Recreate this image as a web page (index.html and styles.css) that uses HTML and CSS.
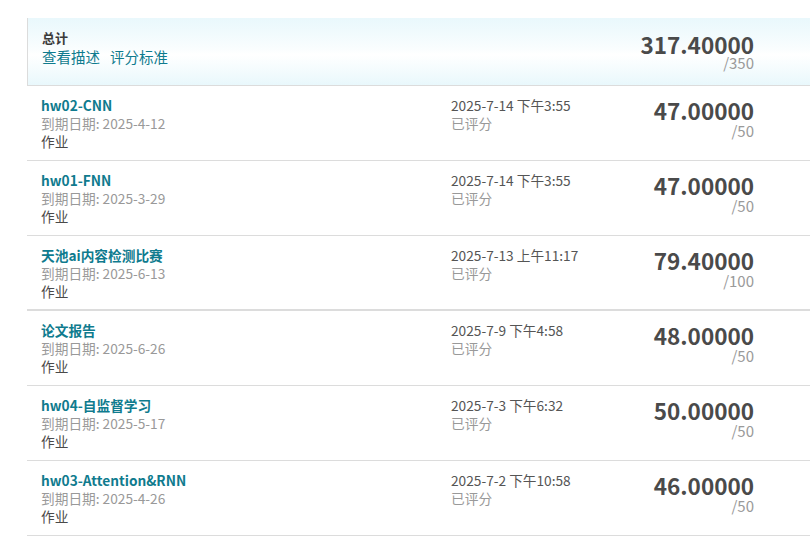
FILE: index.html
```html
<!DOCTYPE html>
<html lang="zh">
<head>
<meta charset="utf-8">
<link rel="stylesheet" href="styles.css">
</head>
<body>
<div class="page">
  <div class="table">
    <div class="total">
      <div class="total-left">
        <div class="total-title">总计</div>
        <div class="total-links"><a href="#">查看描述</a><a href="#">评分标准</a></div>
      </div>
      <div class="score score-total">
        <div class="score-value">317.40000</div>
        <div class="score-max">/350</div>
      </div>
    </div>

    <div class="row">
      <div class="name">
        <div class="title">hw02-CNN</div>
        <div class="due">到期日期: 2025-4-12</div>
        <div class="type">作业</div>
      </div>
      <div class="status">
        <div class="date">2025-7-14 下午3:55</div>
        <div class="graded">已评分</div>
      </div>
      <div class="score">
        <div class="score-value">47.00000</div>
        <div class="score-max">/50</div>
      </div>
    </div>

    <div class="row">
      <div class="name">
        <div class="title">hw01-FNN</div>
        <div class="due">到期日期: 2025-3-29</div>
        <div class="type">作业</div>
      </div>
      <div class="status">
        <div class="date">2025-7-14 下午3:55</div>
        <div class="graded">已评分</div>
      </div>
      <div class="score">
        <div class="score-value">47.00000</div>
        <div class="score-max">/50</div>
      </div>
    </div>

    <div class="row row-thick">
      <div class="name">
        <div class="title">天池ai内容检测比赛</div>
        <div class="due">到期日期: 2025-6-13</div>
        <div class="type">作业</div>
      </div>
      <div class="status">
        <div class="date">2025-7-13 上午11:17</div>
        <div class="graded">已评分</div>
      </div>
      <div class="score">
        <div class="score-value">79.40000</div>
        <div class="score-max">/100</div>
      </div>
    </div>

    <div class="row">
      <div class="name">
        <div class="title">论文报告</div>
        <div class="due">到期日期: 2025-6-26</div>
        <div class="type">作业</div>
      </div>
      <div class="status">
        <div class="date">2025-7-9 下午4:58</div>
        <div class="graded">已评分</div>
      </div>
      <div class="score">
        <div class="score-value">48.00000</div>
        <div class="score-max">/50</div>
      </div>
    </div>

    <div class="row">
      <div class="name">
        <div class="title">hw04-自监督学习</div>
        <div class="due">到期日期: 2025-5-17</div>
        <div class="type">作业</div>
      </div>
      <div class="status">
        <div class="date">2025-7-3 下午6:32</div>
        <div class="graded">已评分</div>
      </div>
      <div class="score">
        <div class="score-value">50.00000</div>
        <div class="score-max">/50</div>
      </div>
    </div>

    <div class="row">
      <div class="name">
        <div class="title">hw03-Attention&amp;RNN</div>
        <div class="due">到期日期: 2025-4-26</div>
        <div class="type">作业</div>
      </div>
      <div class="status">
        <div class="date">2025-7-2 下午10:58</div>
        <div class="graded">已评分</div>
      </div>
      <div class="score">
        <div class="score-value">46.00000</div>
        <div class="score-max">/50</div>
      </div>
    </div>
  </div>
</div>
</body>
</html>
```

FILE: styles.css
```css
html, body {
  margin: 0;
  padding: 0;
  background: #ffffff;
}

body {
  font-family: "Noto Sans CJK SC", "Noto Sans", sans-serif;
  color: #4a4a4a;
  width: 810px;
  height: 541px;
  overflow: hidden;
}

.page {
  padding: 18px 0 0 27px;
}

.table {
  width: 783px;
}

.total {
  display: flex;
  justify-content: space-between;
  align-items: flex-start;
  height: 56px;
  padding: 11px 56px 0 14px;
  border-left: 1px solid #dcdcdc;
  border-bottom: 1px solid #dcdcdc;
  background: linear-gradient(to bottom, #e9f8fc 0%, #f9fdfe 45%, #ffffff 55%, #e9f8fc 100%);
}

.total-title {
  font-size: 13px;
  font-weight: 700;
  line-height: 18px;
  color: #3a3a3a;
}

.total-links {
  display: flex;
  gap: 10px;
  font-size: 14.5px;
  line-height: 20px;
}

.total-links a {
  color: #0f7b8e;
  text-decoration: none;
}

.row {
  display: grid;
  grid-template-columns: 410px 1fr auto;
  height: 64px;
  padding: 10px 56px 0 14px;
  border-bottom: 1px solid #dcdcdc;
}

.row-thick {
  height: 63px;
  border-bottom-width: 2px;
}

.name, .status {
  font-size: 13.7px;
  line-height: 18px;
}

.title {
  font-weight: 700;
  color: #0f7b8e;
}

.due {
  color: #999999;
}

.type {
  color: #4a4a4a;
}

.date {
  color: #555555;
}

.graded {
  color: #999999;
}

.score {
  text-align: right;
  padding-top: 1px;
}

.score-total {
  padding-top: 2px;
}

.score-value {
  font-size: 22.5px;
  font-weight: 700;
  line-height: 26px;
  color: #4a4a4a;
}

.score-max {
  font-size: 15px;
  line-height: 16px;
  color: #9a9a9a;
}

.score-total .score-max {
  margin-top: -2px;
}
```
